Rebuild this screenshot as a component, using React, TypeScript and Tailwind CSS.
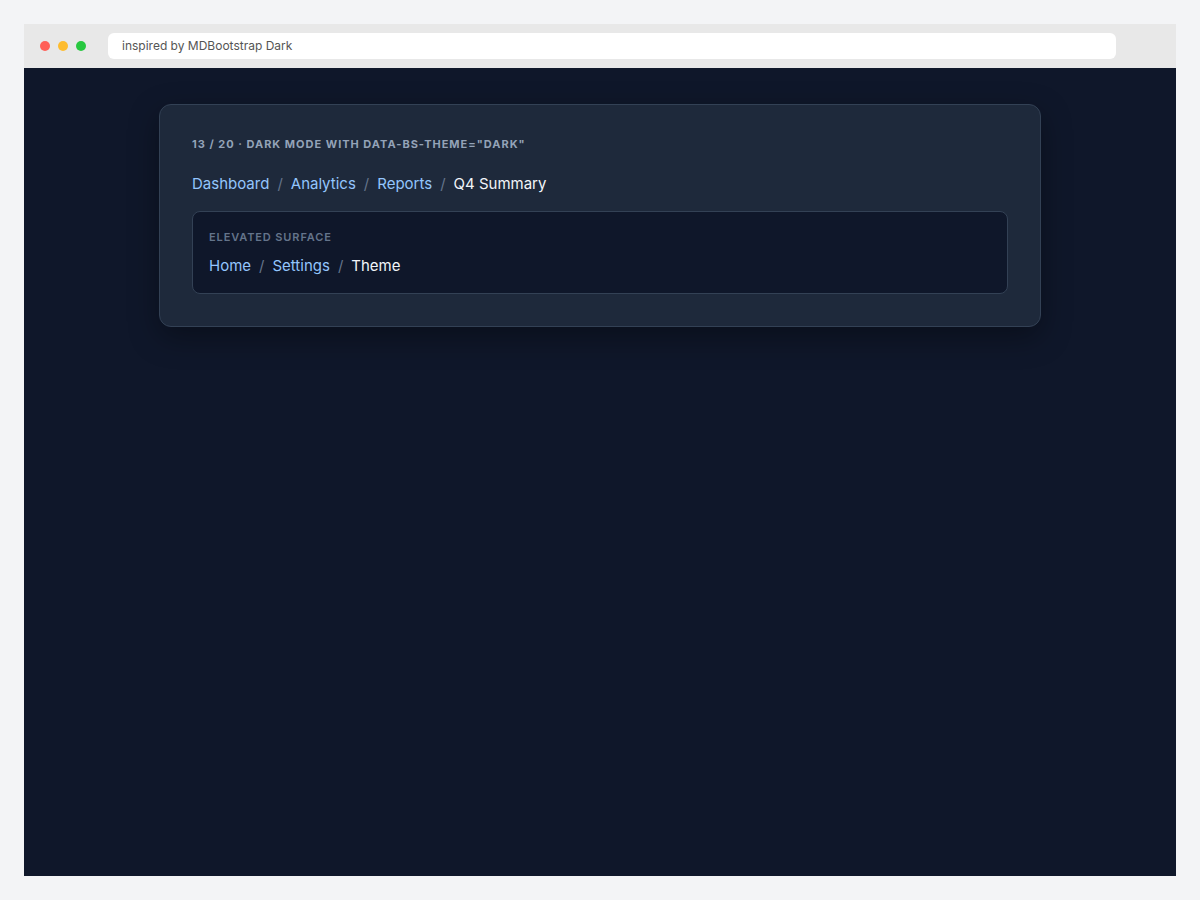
export default function App() {
  const font = { fontFamily: 'Inter, "Liberation Sans", sans-serif' }
  return (
    <div className="min-h-[900px] bg-[#f3f4f6] p-6" style={font}>
      <div className="flex h-[852px] flex-col overflow-hidden">
        <div className="flex h-11 items-center gap-[22px] bg-[#e8e8e8] px-4">
          <div className="flex gap-2">
            <span className="h-2.5 w-2.5 rounded-full bg-[#ff5f57]" />
            <span className="h-2.5 w-2.5 rounded-full bg-[#febc2e]" />
            <span className="h-2.5 w-2.5 rounded-full bg-[#28c840]" />
          </div>
          <div className="flex h-[26px] flex-1 items-center rounded-md bg-white px-[14px] text-xs text-[#555] mr-11">
            inspired by MDBootstrap Dark
          </div>
        </div>
        <div className="flex-1 bg-[#0f172a] px-[135px] pt-9">
          <div className="rounded-xl border border-[#334155] bg-[#1e293b] px-8 pb-8 pt-[31px] shadow-[0_10px_30px_rgba(0,0,0,0.35)]">
            <div className="text-[11px] font-bold uppercase tracking-[0.09em] text-[#94a3b8]">
              13 / 20 · Dark mode with data-bs-theme="dark"
            </div>
            <nav className="mt-[19px] flex items-center text-[15px] leading-6">
              <a className="text-[#93c5fd]">Dashboard</a>
              <span className="px-2 text-[#64748b]">/</span>
              <a className="text-[#93c5fd]">Analytics</a>
              <span className="px-2 text-[#64748b]">/</span>
              <a className="text-[#93c5fd]">Reports</a>
              <span className="px-2 text-[#64748b]">/</span>
              <span className="text-[#f1f5f9]">Q4 Summary</span>
            </nav>
            <div className="mt-[15px] rounded-lg border border-[#334155] bg-[#0f172a] px-4 pb-[15px] pt-[17px]">
              <div className="text-[11px] font-semibold uppercase tracking-[0.08em] text-[#64748b]">
                Elevated surface
              </div>
              <nav className="mt-[9px] flex items-center text-[15px] leading-6">
                <a className="text-[#93c5fd]">Home</a>
                <span className="px-2 text-[#64748b]">/</span>
                <a className="text-[#93c5fd]">Settings</a>
                <span className="px-2 text-[#64748b]">/</span>
                <span className="text-[#f1f5f9]">Theme</span>
              </nav>
            </div>
          </div>
        </div>
      </div>
    </div>
  )
}
